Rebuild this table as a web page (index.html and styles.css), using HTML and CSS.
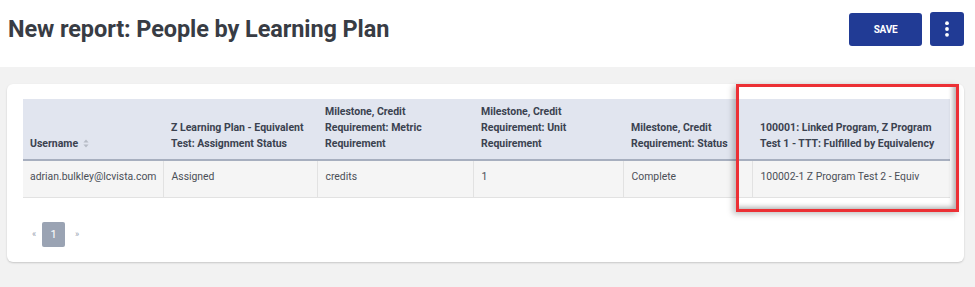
FILE: index.html
```html
<!DOCTYPE html>
<html>
<head>
<meta charset="utf-8">
<link rel="stylesheet" href="styles.css">
</head>
<body>
<header class="topbar">
  <h1 class="title">New report: People by Learning Plan</h1>
  <div class="actions">
    <button class="btn save">SAVE</button>
    <button class="btn more" aria-label="More">
      <svg width="4" height="16" viewBox="0 0 4 16"><circle cx="2" cy="2.2" r="1.9" fill="#fff"/><circle cx="2" cy="8" r="1.9" fill="#fff"/><circle cx="2" cy="13.8" r="1.9" fill="#fff"/></svg>
    </button>
  </div>
</header>
<main class="content">
  <section class="card">
    <table class="report">
      <colgroup>
        <col class="c1"><col class="c2"><col class="c3"><col class="c4"><col class="c5"><col class="c6">
      </colgroup>
      <thead>
        <tr>
          <th>Username <svg class="sort" width="6" height="9" viewBox="0 0 6 9"><path d="M3 0.5L5.6 3.6H0.4Z M3 8.5L5.6 5.4H0.4Z" fill="#b7bcc6"/></svg></th>
          <th>Z Learning Plan - Equivalent Test: Assignment Status</th>
          <th>Milestone, Credit Requirement: Metric Requirement</th>
          <th>Milestone, Credit Requirement: Unit Requirement</th>
          <th>Milestone, Credit Requirement: Status</th>
          <th>100001: Linked Program, Z Program Test 1 - TTT: Fulfilled by Equivalency</th>
        </tr>
      </thead>
      <tbody>
        <tr>
          <td>adrian.bulkley@lcvista.com</td>
          <td>Assigned</td>
          <td>credits</td>
          <td>1</td>
          <td>Complete</td>
          <td>100002-1 Z Program Test 2 - Equiv</td>
        </tr>
      </tbody>
    </table>
    <nav class="pager">
      <span class="arrow">&laquo;</span>
      <span class="page current">1</span>
      <span class="arrow">&raquo;</span>
    </nav>
  </section>
  <div class="highlight"></div>
</main>
</body>
</html>
```
FILE: styles.css
```css
html, body {
  margin: 0;
  padding: 0;
}
body {
  font-family: Roboto, "Liberation Sans", Arial, sans-serif;
  background: #f2f2f2;
  width: 975px;
  height: 287px;
  overflow: hidden;
}
.topbar {
  background: #fff;
  height: 67px;
  display: flex;
  align-items: flex-start;
  justify-content: space-between;
  padding: 0 11px 0 8px;
  box-sizing: border-box;
}
.title {
  margin: 13px 0 0 0;
  font-size: 23.5px;
  line-height: 32px;
  font-weight: 700;
  color: #383c44;
  letter-spacing: -0.1px;
}
.actions {
  display: flex;
  gap: 8px;
  margin-top: 13px;
}
.btn {
  border: none;
  background: #213b95;
  color: #fff;
  border-radius: 3px;
  height: 33px;
  display: flex;
  align-items: center;
  justify-content: center;
  padding: 0;
  font-family: Roboto, "Liberation Sans", Arial, sans-serif;
}
.save {
  width: 73px;
  font-size: 10px;
  font-weight: 700;
  letter-spacing: -0.3px;
}
.more {
  width: 34px;
  margin-top: -1px;
  height: 34px;
}
.content {
  position: relative;
  padding: 17px 11px 0 7px;
}
.card {
  background: #fff;
  border-radius: 6px;
  box-shadow: 0 1px 2px rgba(0,0,0,0.18);
  height: 178px;
  box-sizing: border-box;
  padding: 15px 14px 0 16px;
}
.report {
  border-collapse: collapse;
  table-layout: fixed;
  width: 927px;
}
.c1 { width: 140px; }
.c2 { width: 154px; }
.c3 { width: 156px; }
.c4 { width: 150px; }
.c5 { width: 129px; }
.c6 { width: 198px; }
.report th {
  background: #e1e5ef;
  color: #3b4250;
  font-size: 10.5px;
  font-weight: 700;
  text-align: left;
  vertical-align: bottom;
  line-height: 16px;
  height: 61px;
  padding: 0 6px 7px 8px;
  border-bottom: 2px solid #a7afbf;
  box-sizing: border-box;
}
.report th:first-child {
  padding-left: 7px;
}
.sort {
  vertical-align: -1px;
  margin-left: 2px;
}
.report td {
  background: #f5f5f5;
  color: #4b4f57;
  font-size: 10.4px;
  line-height: 16px;
  height: 37px;
  vertical-align: top;
  padding: 8px 6px 0 8px;
  box-sizing: border-box;
  border-left: 1px solid #e2e2e2;
  border-bottom: 1px solid #e2e2e2;
  white-space: nowrap;
}
.report td:first-child {
  border-left: none;
  padding-left: 7px;
}
.pager {
  display: flex;
  align-items: center;
  margin-top: 24px;
  margin-left: 9px;
  font-size: 9px;
  color: #9aa3b3;
}
.arrow {
  width: 10px;
  text-align: left;
}
.arrow:last-child {
  margin-left: 10px;
}
.page {
  width: 23px;
  height: 25px;
  display: flex;
  align-items: center;
  justify-content: center;
  font-size: 11px;
  border-radius: 2px;
}
.current {
  background: #9aa3b3;
  color: #fff;
}
.highlight {
  position: absolute;
  left: 736px;
  top: 17px;
  width: 223px;
  height: 128px;
  box-sizing: border-box;
  border: 3px solid #ec3035;
  box-shadow: -3px 2px 6px rgba(0,0,0,0.25), inset -5px -4px 5px -2px rgba(0,0,0,0.3);
  pointer-events: none;
}
```
